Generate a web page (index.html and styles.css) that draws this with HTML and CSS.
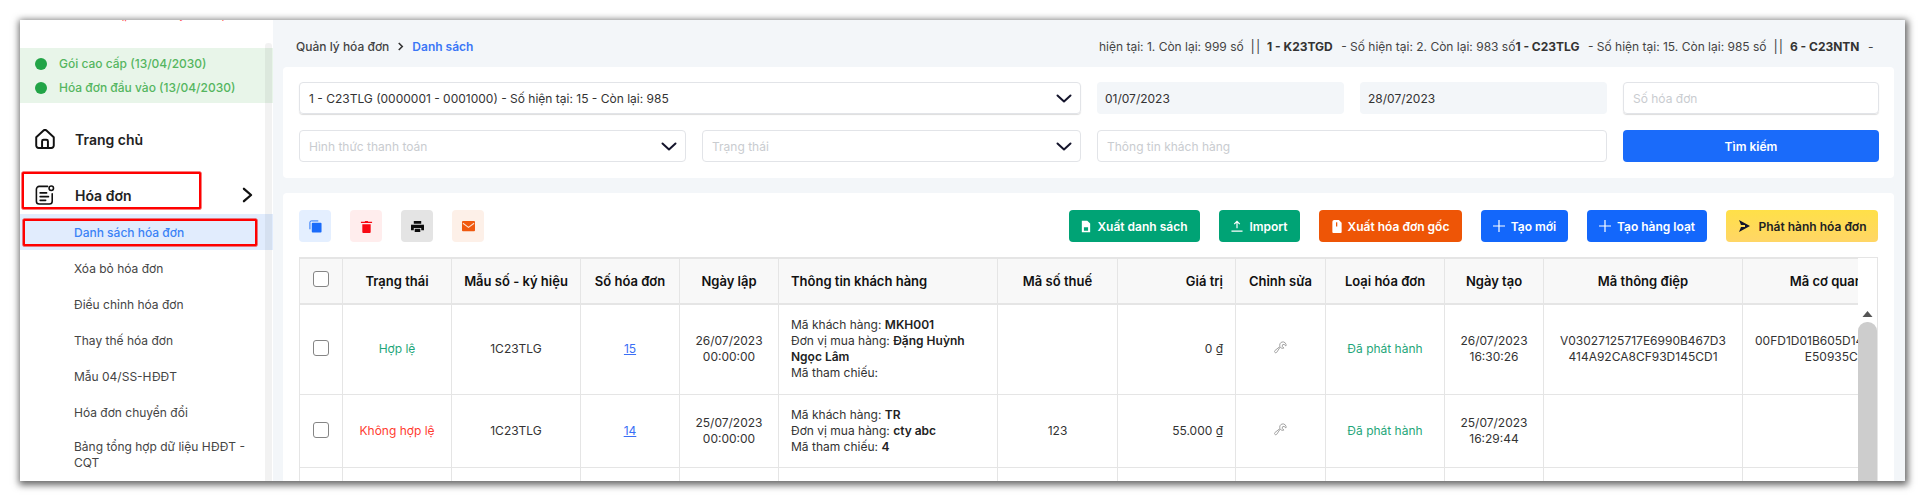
FILE: index.html
```html
<!DOCTYPE html>
<html lang="vi">
<head>
<meta charset="utf-8">
<title>Danh sách hóa đơn</title>
<link rel="stylesheet" href="styles.css">
</head>
<body>
<div class="window">
  <aside class="sidebar">
    <div class="brand"><span>(powered by AnhLe)</span></div>
    <div class="plans">
      <div class="plan"><i class="dot"></i>Gói cao cấp (13/04/2030)</div>
      <div class="plan"><i class="dot"></i>Hóa đơn đầu vào (13/04/2030)</div>
    </div>
    <div class="menu-item home">
      <svg class="menu-icon" viewBox="2 2 20 20.500" fill="none" stroke="#111" stroke-width="2" stroke-linejoin="round" stroke-linecap="round"><path d="M3 10.500 10.500 3.600a2.200 2.200 0 0 1 3 0L21 10.500V19a2.500 2.500 0 0 1-2.500 2.500h-13A2.500 2.500 0 0 1 3 19z"/><path d="M9 21.500V14.500a1.500 1.500 0 0 1 1.500-1.500h3a1.500 1.500 0 0 1 1.500 1.500v7"/></svg>
      <span>Trang chủ</span>
    </div>
    <div class="menu-item invoice">
      <svg class="menu-icon" viewBox="2 1.500 20.500 21.500" fill="none" stroke="#111" stroke-width="1.700" stroke-linecap="round" stroke-linejoin="round"><path d="M15 3H6a3 3 0 0 0-3 3v13a3 3 0 0 0 3 3h11a3 3 0 0 0 3-3v-8"/><circle cx="19" cy="5" r="2.400"/><path d="M7 10h7M7 14h9M7 18h6"/></svg>
      <span>Hóa đơn</span>
      <svg class="menu-arrow" viewBox="0 0 12 18" fill="none" stroke="#111" stroke-width="2.600" stroke-linecap="round" stroke-linejoin="round"><path d="M2 2l8 7-8 7"/></svg>
    </div>
    <div class="sub active">Danh sách hóa đơn</div>
    <div class="sub">Xóa bỏ hóa đơn</div>
    <div class="sub">Điều chỉnh hóa đơn</div>
    <div class="sub">Thay thế hóa đơn</div>
    <div class="sub">Mẫu 04/SS-HĐĐT</div>
    <div class="sub">Hóa đơn chuyển đổi</div>
    <div class="sub two-line">Bảng tổng hợp dữ liệu HĐĐT - CQT</div>
    <div class="side-track"></div>
    <div class="mark mark-invoice"></div>
    <div class="mark mark-list"></div>
  </aside>

  <main class="main">
    <div class="topbar">
      <div class="crumbs">
        <span>Quản lý hóa đơn</span>
        <svg class="crumb-sep" viewBox="0 0 8 10" fill="none" stroke="#333" stroke-width="1.800"><path d="M2 1l4 4-4 4"/></svg>
        <span class="crumb-now">Danh sách</span>
      </div>
      <div class="ticker">hiện tại: 1. Còn lại: 999 số <span class="pipes">||</span> <b>1 - K23TGD</b> - Số hiện tại: 2. Còn lại: 983 số<b>1 - C23TLG</b> - Số hiện tại: 15. Còn lại: 985 số <span class="pipes">||</span> <b>6 - C23NTN</b> -</div>
    </div>

    <section class="card filters">
      <div class="field span2 dark">1 - C23TLG (0000001 - 0001000) - Số hiện tại: 15 - Còn lại: 985
        <svg class="caret" viewBox="0 0 16 9" fill="none" stroke="#14142b" stroke-width="2" stroke-linecap="round" stroke-linejoin="round"><path d="M1.500 1.500 8 7.500l6.500-6"/></svg>
      </div>
      <div class="field date">01/07/2023</div>
      <div class="field date">28/07/2023</div>
      <div class="field hint raised">Số hóa đơn</div>
      <div class="field hint">Hình thức thanh toán
        <svg class="caret" viewBox="0 0 16 9" fill="none" stroke="#14142b" stroke-width="2" stroke-linecap="round" stroke-linejoin="round"><path d="M1.500 1.500 8 7.500l6.500-6"/></svg>
      </div>
      <div class="field hint">Trạng thái
        <svg class="caret" viewBox="0 0 16 9" fill="none" stroke="#14142b" stroke-width="2" stroke-linecap="round" stroke-linejoin="round"><path d="M1.500 1.500 8 7.500l6.500-6"/></svg>
      </div>
      <div class="field hint span2">Thông tin khách hàng</div>
      <div class="search">Tìm kiếm</div>
    </section>

    <section class="card list">
      <div class="toolbar">
        <div class="tools">
          <div class="tool tool-blue"><svg viewBox="0 0 14 14"><path fill="none" stroke="#1a6bfa" stroke-width="1" d="M1 10V2.500A1.500 1.500 0 0 1 2.500 1H10"/><rect x="3" y="3" width="10.500" height="10.500" rx="1" fill="#1a6bfa"/></svg></div>
          <div class="tool tool-red"><svg viewBox="0 0 14 14"><path fill="#f80a14" d="M2.500 4.500h9V13a1 1 0 0 1-1 1h-7a1 1 0 0 1-1-1zM1 2h4l.6-1h2.800l.6 1h4v1.300H1z"/></svg></div>
          <div class="tool tool-grey"><svg viewBox="0 0 14 14"><path fill="#0b0b0b" d="M3 1h8v3H3zM1.500 5h11A1.200 1.200 0 0 1 14 6v5h-3V8.500H3V11H0V6a1.200 1.200 0 0 1 1.500-1zM4 9.500h6V13H4z"/></svg></div>
          <div class="tool tool-orange"><svg viewBox="0 0 14 12"><rect width="14" height="11" rx="1" fill="#f0590f"/><path d="M1 2.500 7 7l6-4.500" fill="none" stroke="#fde3d3" stroke-width="1.100"/></svg></div>
        </div>
        <div class="actions">
          <div class="btn green w1"><svg class="bi" viewBox="0 0 12 14"><path fill="#fff" d="M1 0h6.500L11 3.500V14H1zM3.500 8v4h5V8z"/></svg>Xuất danh sách</div>
          <div class="btn green w2"><svg class="bi bi-wide" viewBox="0 0 12 13" fill="none" stroke="#fff" stroke-width="1.300"><path d="M6 9V2M3 4.500 6 1.500l3 3M0 12h12"/></svg>Import</div>
          <div class="btn orange w3"><svg class="bi" viewBox="0 0 10 14"><path fill="#fff" d="M2 0h5l3 3v10a1 1 0 0 1-1 1H1a1 1 0 0 1-1-1V2a2 2 0 0 1 2-2z"/><path stroke="#ee5506" stroke-width="1.400" d="M4.600 2.500V7"/></svg>Xuất hóa đơn gốc</div>
          <div class="btn blue w4"><svg class="bi bi-wide" viewBox="0 0 12 12" fill="none" stroke="#fff" stroke-width="1.200"><path d="M6 0v12M0 6h12"/></svg>Tạo mới</div>
          <div class="btn blue w5"><svg class="bi bi-wide" viewBox="0 0 12 12" fill="none" stroke="#fff" stroke-width="1.200"><path d="M6 0v12M0 6h12"/></svg>Tạo hàng loạt</div>
          <div class="btn yellow w6"><svg class="bi bi-wide" viewBox="0 0 12 12"><path fill="#14142b" d="M1 0l11 6-11 6 2-5h4V5H3z"/></svg>Phát hành hóa đơn</div>
        </div>
      </div>

      <div class="table-frame">
        <div class="table-clip">
          <table class="grid">
            <colgroup>
              <col class="c1"><col class="c2"><col class="c3"><col class="c4"><col class="c5"><col class="c6"><col class="c7"><col class="c8"><col class="c9"><col class="c10"><col class="c11"><col class="c12"><col class="c13">
            </colgroup>
            <thead>
              <tr>
                <th><input class="check" type="checkbox"></th>
                <th>Trạng thái</th>
                <th>Mẫu số - ký hiệu</th>
                <th>Số hóa đơn</th>
                <th>Ngày lập</th>
                <th class="left">Thông tin khách hàng</th>
                <th>Mã số thuế</th>
                <th class="right">Giá trị</th>
                <th>Chỉnh sửa</th>
                <th>Loại hóa đơn</th>
                <th>Ngày tạo</th>
                <th>Mã thông điệp</th>
                <th>Mã cơ quan thuế</th>
              </tr>
            </thead>
            <tbody>
              <tr class="row-tall">
                <td><input class="check" type="checkbox"></td>
                <td class="ok">Hợp lệ</td>
                <td>1C23TLG</td>
                <td><span class="num">15</span></td>
                <td>26/07/2023<br>00:00:00</td>
                <td class="left">Mã khách hàng: <b>MKH001</b><br>Đơn vị mua hàng: <b>Đặng Huỳnh Ngọc Lâm</b><br>Mã tham chiếu:</td>
                <td></td>
                <td class="right">0 ₫</td>
                <td><svg class="wrench" viewBox="0 0 16 16" fill="none" stroke="#a0a0a0" stroke-width="1.200" stroke-linejoin="round"><path d="M9.800 1.300a3.900 3.900 0 0 1 4.900 4.900l-2.300-2.100-1.900.5-.4 1.900 2.100 2.200a3.900 3.900 0 0 1-4.600-1.200L3.300 14a1.500 1.500 0 0 1-2.200-2.200l6.300-5.100a3.900 3.900 0 0 1 2.400-5.400z"/></svg></td>
                <td class="ok">Đã phát hành</td>
                <td>26/07/2023<br>16:30:26</td>
                <td>V03027125717E6990B467D3<br>414A92CA8CF93D145CD1</td>
                <td>00FD1D01B605D14A7C2E8B1F<br>E50935C4D1</td>
              </tr>
              <tr class="row-mid">
                <td><input class="check" type="checkbox"></td>
                <td class="bad">Không hợp lệ</td>
                <td>1C23TLG</td>
                <td><span class="num">14</span></td>
                <td>25/07/2023<br>00:00:00</td>
                <td class="left">Mã khách hàng: <b>TR</b><br>Đơn vị mua hàng: <b>cty abc</b><br>Mã tham chiếu: <b>4</b></td>
                <td>123</td>
                <td class="right">55.000 ₫</td>
                <td><svg class="wrench" viewBox="0 0 16 16" fill="none" stroke="#a0a0a0" stroke-width="1.200" stroke-linejoin="round"><path d="M9.800 1.300a3.900 3.900 0 0 1 4.900 4.900l-2.300-2.100-1.900.5-.4 1.900 2.100 2.200a3.900 3.900 0 0 1-4.600-1.200L3.300 14a1.500 1.500 0 0 1-2.200-2.200l6.300-5.100a3.900 3.900 0 0 1 2.400-5.400z"/></svg></td>
                <td class="ok">Đã phát hành</td>
                <td>25/07/2023<br>16:29:44</td>
                <td></td>
                <td></td>
              </tr>
              <tr class="row-mid">
                <td></td><td></td><td></td><td></td><td></td><td></td><td></td><td></td><td></td><td></td><td></td><td></td><td></td>
              </tr>
            </tbody>
          </table>
        </div>
        <div class="vscroll">
          <svg class="vscroll-up" viewBox="0 0 10 6"><path fill="#555" d="M5 0l5 6H0z"/></svg>
          <div class="vscroll-thumb"></div>
        </div>
      </div>
    </section>
  </main>
</div>
</body>
</html>
```
FILE: styles.css
```css
* { box-sizing: border-box; }
html, body { margin: 0; height: 100%; background: #fff; overflow: hidden; }
body { padding: 20px 27px 20px 20px; font-family: Inter, "Noto Sans", sans-serif; color: #333; font-size: 12px; }

.window { display: flex; width: 1885px; height: 461px; overflow: hidden; background: #f3f6f9; box-shadow: 1px 2px 7px 2px rgba(0,0,0,.6); }

/* sidebar */
.sidebar { position: relative; width: 253px; flex: none; background: #fff; overflow: hidden; }
.brand { height: 28px; overflow: hidden; color: #f44; text-align: center; font-size: 11px; line-height: 14px; padding-left: 53px; }
.brand span { display: block; margin-top: -12px; }
.plans { display: flex; flex-direction: column; justify-content: center; gap: 8px; height: 55px; background: #e8f5e9; color: #55b560; font-size: 12px; font-weight: 500; padding-left: 15px; }
.plan { display: flex; align-items: center; gap: 12px; height: 16px; }
.dot { width: 12px; height: 12px; border-radius: 50%; background: #22a447; }
.menu-item { display: flex; align-items: center; padding: 0 20px 0 15px; height: 38px; font-size: 14px; font-weight: 600; color: #222; }
.menu-item span { margin-left: 20px; }
.menu-item.home { margin-top: 17px; }
.menu-item.invoice { margin-top: 18px; }
.menu-icon { width: 20px; height: 20px; flex: none; }
.menu-arrow { width: 11px; height: 16px; margin-left: auto; }
.sub { display: flex; align-items: center; height: 36px; padding-left: 54px; padding-right: 10px; font-size: 12px; color: #444; }
.sub.active { background: #e1ecfd; color: #3b82f6; font-weight: 500; }
.two-line { align-items: flex-start; padding-top: 9px; line-height: 16px; height: 48px; }
.side-track { position: absolute; left: 245px; top: 23px; bottom: 0; width: 7px; background: rgba(0,0,0,.05); border-radius: 3px 3px 0 0; }
.mark { position: absolute; border: 2px solid #f00; border-radius: 1px; box-shadow: 0 0 0 .5px #e00; }
.mark-invoice { left: 2px; top: 152px; width: 179px; height: 37px; }
.mark-list { left: 3px; top: 199px; width: 234px; height: 27px; }

/* main */
.main { flex: 1; min-width: 0; padding: 0 11px 0 10px; display: flex; flex-direction: column; }
.topbar { display: flex; align-items: center; justify-content: space-between; height: 33px; margin: 10px 0 4px; padding-left: 13px; }
.crumbs { display: flex; align-items: center; gap: 8px; font-size: 12px; font-weight: 500; color: #444; }
.crumb-sep { width: 7px; height: 9px; }
.crumb-now { color: #3b76f6; font-weight: 600; }
.ticker { width: 783px; margin-right: 12px; white-space: nowrap; overflow: hidden; font-size: 12px; color: #444; }
.ticker b { font-weight: 700; color: #333; margin-right: 5px; }
.pipes { font-size: 17px; line-height: 12px; margin: 0 3px; font-weight: 300; }

.card { background: #fff; border-radius: 4px; padding-left: 16px; padding-right: 15px; }
.filters { display: grid; grid-template-columns: 387px 379px 247px 247px 256px; grid-template-rows: 32px 32px; gap: 16px; padding-top: 15px; padding-bottom: 16px; margin-bottom: 15px; }
.span2 { grid-column: span 2; }
.field { position: relative; display: flex; align-items: center; padding: 0 9px; border: 1px solid #e2e4e8; border-radius: 4px; font-size: 12px; }
.dark { color: #333; box-shadow: 0 1px 1px #ddd; }
.raised { box-shadow: 0 1px 1px #ddd; }
.hint { color: #c9ccd0; }
.date { border: 0; background: #f3f6f9; color: #333; padding: 0 8px; }
.caret { position: absolute; right: 8px; top: 11px; width: 16px; height: 9px; }
.search { display: flex; align-items: center; justify-content: center; background: #1a6bfa; color: #fff; font-weight: 600; border-radius: 4px; font-size: 12px; }

.list { flex: 1; min-height: 0; padding-top: 17px; padding-right: 16px; border-radius: 4px 4px 0 0; }
.toolbar { display: flex; justify-content: space-between; height: 32px; margin-bottom: 15px; }
.tools { display: flex; gap: 19px; }
.tool { display: flex; align-items: center; justify-content: center; width: 32px; height: 32px; border-radius: 4px; }
.tool svg { width: 13px; height: 13px; }
.tool-blue { background: #e4efff; }
.tool-red { background: #ffeded; }
.tool-grey { background: #e4e4e4; }
.tool-orange { background: #fdf0e8; }
.actions { display: flex; gap: 19px; }
.btn { display: flex; align-items: center; justify-content: center; gap: 6px; height: 32px; border-radius: 4px; color: #fff; font-weight: 600; font-size: 12px; white-space: nowrap; }
.bi { width: 10px; height: 13px; flex: none; }
.bi-wide { width: 12px; height: 12px; }
.green { background: #00a375; }
.orange { background: #ee5506; }
.blue { background: #1367fb; }
.yellow { background: linear-gradient(#ffe048, #ffd666); color: #222; }
.w1 { width: 131px; } .w2 { width: 81px; } .w3 { width: 143px; } .w4 { width: 87px; } .w5 { width: 120px; } .w6 { width: 152px; gap: 9px; }

/* table */
.table-frame { position: relative; height: 230px; border-top: 1px solid #e5e5e5; border-right: 1px solid #e5e5e5; overflow: hidden; }
.table-clip { width: 1559px; height: 100%; overflow: hidden; }
.grid { table-layout: fixed; border-collapse: collapse; width: 1642px; font-size: 12px; line-height: 16px; color: #333; }
.c1 { width: 43px; } .c2 { width: 109px; } .c3 { width: 129px; } .c4 { width: 99px; } .c5 { width: 99px; } .c6 { width: 219px; } .c7 { width: 120px; } .c8 { width: 118px; } .c9 { width: 90px; } .c10 { width: 119px; } .c11 { width: 99px; } .c12 { width: 199px; } .c13 { width: 199px; }
.grid th, .grid td { border: 1px solid #e5e5e5; text-align: center; padding: 0 12px; vertical-align: middle; white-space: normal; }
.grid thead tr { height: 45px; }
.grid th { background: #f8f8f8; font-size: 13px; font-weight: 600; color: #111; border-bottom-width: 2px; padding: 0 4px; white-space: nowrap; }
.grid th.left, .grid td.left { text-align: left; padding-left: 12px; }
.grid th.right, .grid td.right { text-align: right; padding-right: 12px; }
.grid b { font-weight: 600; color: #222; }
.row-tall { height: 91px; }
.row-mid { height: 73px; }
.check { appearance: none; display: block; width: 16px; height: 16px; margin: -3px auto 0; border: 1px solid #858585; border-radius: 3px; background: #fff; }
.ok { color: #1fa67a; }
.bad { color: #ff3b30; }
.num { color: #3b6ff5; text-decoration: underline; }
.wrench { display: block; width: 13px; height: 13px; margin: -3px auto 0; }
.vscroll { position: absolute; top: 46px; right: 0; bottom: 0; width: 19px; background: #fff; }
.vscroll-up { position: absolute; left: 4px; top: 7px; width: 11px; height: 6px; }
.vscroll-thumb { position: absolute; left: 0; right: 0; top: 18px; bottom: 0; background: #cdcdcd; border-radius: 9px 9px 0 0; }
```
